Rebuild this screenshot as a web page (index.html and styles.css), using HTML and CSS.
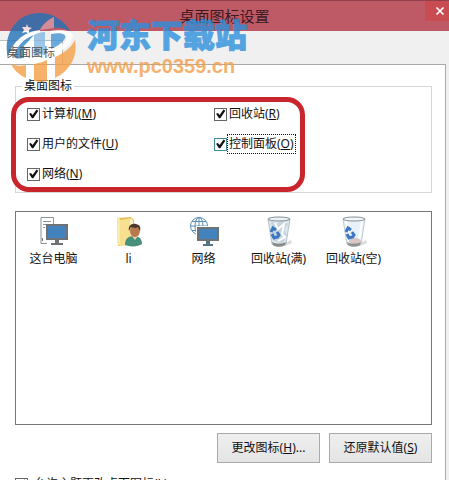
FILE: index.html
```html
<!DOCTYPE html>
<html lang="zh-CN">
<head>
    <meta charset="UTF-8">
    <meta name="viewport" content="width=device-width, initial-scale=1.0">
    <title>桌面图标设置</title>
    <link rel="stylesheet" href="styles.css">
</head>
<body>
    <div class="window">
        <header class="titlebar">
            <h1>桌面图标设置</h1>
            <button class="close" aria-label="关闭">
                <svg width="10" height="10" viewBox="0 0 10 10"><path d="M1.500 1.500l7 7M8.500 1.500l-7 7" stroke="#fff" stroke-width="1.700"/></svg>
            </button>
        </header>

        <div class="tabs">
            <button class="tab"><span>桌面图标</span></button>
        </div>

        <main class="panel">
            <fieldset class="group">
                <legend>桌面图标</legend>
                <div class="options">
                    <label><input type="checkbox" checked><span>计算机(<u>M</u>)</span></label>
                    <label><input type="checkbox" checked><span>回收站(<u>R</u>)</span></label>
                    <label><input type="checkbox" checked><span>用户的文件(<u>U</u>)</span></label>
                    <label class="focused"><input type="checkbox" checked><span>控制面板(<u>O</u>)</span></label>
                    <label><input type="checkbox" checked><span>网络(<u>N</u>)</span></label>
                </div>
                <div class="marker"></div>
            </fieldset>

            <ul class="icon-list">
                <li>
                    <svg width="32" height="32" viewBox="0 0 32 32">
                        <path d="M3 1.500h12.500v7M3 1.500v26h6M5 5.500h8M5 8.500h5M5 11.500h2" fill="none" stroke="#8b939b"/>
                        <path d="M4.500 22v3" stroke="#777"/>
                        <rect x="8" y="8" width="22" height="16" fill="#fff"/>
                        <rect x="9" y="9" width="20" height="14" fill="#4383bd" stroke="#6e7275" stroke-width="2"/>
                        <path d="M17 24h4v3h4v2H13v-2h4z" fill="#6e7275"/>
                    </svg>
                    <span>这台电脑</span>
                </li>
                <li>
                    <svg width="32" height="32" viewBox="0 0 32 32">
                        <path d="M5 2l13-1 3 3v24L5 30z" fill="#e5bd56"/>
                        <path d="M4 1l3 2v27l-3-3z" fill="#f8e9ad"/>
                        <path d="M7 4l12-2v26L7 30z" fill="#f7e08f"/>
                        <path d="M17 3l3 1v11h-3z" fill="#fff3c5"/>
                        <path d="M12 29c0-6 3-9 9-9s8 4 8 8c-4 3-12 3-17 1z" fill="#478f7a"/>
                        <path d="M19 20l3 4 3-4-1-3h-4z" fill="#f0d3b0"/>
                        <ellipse cx="22" cy="15" rx="5" ry="6" fill="#b9794e"/>
                        <path d="M16 15c-1-5 2-8 7-7 4 1 5 3 4 7l-2-4c-3 2-5 0-7 0z" fill="#49382b"/>
                    </svg>
                    <span>li</span>
                </li>
                <li>
                    <svg width="32" height="32" viewBox="0 0 32 32">
                        <g fill="none" stroke="#5a8fb3"><circle cx="11" cy="10" r="8.500"/><ellipse cx="11" cy="10" rx="4" ry="8.500"/><path d="M2.500 10h17M4 5.500h14M4 14.500h14M11 1.500v17"/></g>
                        <rect x="8" y="10" width="23" height="16" fill="#fff"/>
                        <rect x="10" y="12" width="20" height="12" fill="#4383bd" stroke="#6e7275" stroke-width="2"/>
                        <path d="M18 25h4v3h3v2H15v-2h3z" fill="#537487"/>
                    </svg>
                    <span>网络</span>
                </li>
                <li>
                    <svg width="32" height="32" viewBox="0 0 32 32">
                        <path d="M21 28l7-4 1 3-7 3z" fill="#ddd"/>
                        <path d="M5 3l4 25c3 3 11 3 14 0l4-25z" fill="#dce6ed" stroke="#b6c2cb"/>
                        <path d="M8 5l6 3 4-4 7 4-4 6 3 5-4 8-9-2-2-12z" fill="#c8d4dd"/>
                        <path d="M12 7l3 6 6-5-2 10 3 3-7 4" fill="none" stroke="#fff" stroke-width="2"/>
                        <ellipse cx="16" cy="3" rx="11" ry="2" fill="#eef2f4" stroke="#858f96"/>
                        <path d="M9 26c4 2 10 2 14 0l-1 3c-3 2-9 2-12 0z" fill="#8a8a8a"/>
                        <g fill="none" stroke="#3c78c2" stroke-width="3"><path d="M8 16l2-4 3 2M9 18l2 4 3-1M14 16l2 3-2 3"/></g>
                    </svg>
                    <span>回收站(满)</span>
                </li>
                <li>
                    <svg width="32" height="32" viewBox="0 0 32 32">
                        <path d="M21 28l7-4 1 3-7 3z" fill="#ddd"/>
                        <path d="M5 3l4 25c3 3 11 3 14 0l4-25z" fill="#e8f1f8" stroke="#bdcad3"/>
                        <path d="M8 5l3 20M24 5l-3 20" stroke="#fff" stroke-width="2"/>
                        <ellipse cx="16" cy="3" rx="11" ry="2" fill="#f5f8fa" stroke="#858f96"/>
                        <ellipse cx="17" cy="25" rx="6" ry="3" fill="#d9c6c5"/>
                        <path d="M9 26c4 2 10 2 14 0l-1 3c-3 2-9 2-12 0z" fill="#929292"/>
                        <g fill="none" stroke="#3c78c2" stroke-width="3"><path d="M8 16l2-4 3 2M9 18l2 4 3-1M14 16l2 3-2 3"/></g>
                    </svg>
                    <span>回收站(空)</span>
                </li>
            </ul>

            <div class="actions">
                <button>更改图标(<u>H</u>)...</button>
                <button>还原默认值(<u>S</u>)</button>
            </div>

            <label class="theme"><input type="checkbox" checked><span>允许主题更改桌面图标(<u>L</u>)</span></label>
        </main>

        <div class="watermark">
            <svg width="72" height="70" viewBox="0 0 72 70">
                <path d="M3 47C-3 22 12 1 34 1c14 0 25 7 31 18-6-3-11-4-16-3V5c-6 3-12 8-14 13C19 20 7 32 3 47z" fill="#2372b8"/>
                <path d="M49 16V5c-6 3-12 8-14 13z" fill="#d99aa8"/>
                <path d="M3 46c3-15 15-26 32-28v24C24 48 10 50 3 46z" fill="#fff"/>
                <path d="M9 45c2-10 9-18 20-22L19 34v12c-4 1-8 1-10-1z" fill="#2f86cb"/>
                <path d="M29 23c3-2 7-3 11-3v21l-11 4z" fill="#85b9e4"/>
                <path d="M45 19c17-3 26 1 22 9C61 42 24 55 4 47c22 1 51-9 57-19 3-5-5-7-16-5z" fill="#fff"/>
                <path d="M46 22c12-2 17 1 13 6-3 4-8 7-13 9z" fill="#4795d2"/>
                <path d="M6 52c5 2 10 2 15 1v13C14 63 9 58 6 52z" fill="#f5a047"/>
                <path d="M29 52c5-1 9-2 13-4v21c-4 1-9 1-13 0z" fill="#f5a047"/>
                <path d="M50 45c9-4 16-9 20-17 3 16-5 31-20 38z" fill="#f5a047"/>
                <path d="M22 12l1 3 4 1-3 2v4l-3-2-4 1 2-3-2-3h4z" fill="#fff"/>
            </svg>
            <div class="brand">
                <strong>河东下载站</strong>
                <span>www.pc0359.cn</span>
            </div>
        </div>
    </div>
</body>
</html>
```
FILE: styles.css
```css
* {
    box-sizing: border-box;
}
body {
    margin: 0;
    height: 100vh;
    overflow: hidden;
    background-color: #f0f0f0;
    color: #111;
    font-family: 'Noto Sans', 'Noto Sans CJK SC', sans-serif;
    font-size: 12px;
    line-height: 18px;
}
button {
    font: inherit;
    color: inherit;
}
.window {
    position: relative;
}
.titlebar {
    position: relative;
    display: flex;
    align-items: center;
    justify-content: center;
    height: 31px;
    background-color: #be5a66;
    border-top: 1px solid #92404c;
}
h1 {
    margin: 0;
    font-size: 15px;
    font-weight: normal;
    color: #3c1820;
}
.close {
    position: absolute;
    top: 0;
    right: 0;
    width: 24px;
    height: 20px;
    padding: 0 0 0 10px;
    border: none;
    background-color: #c94c50;
    line-height: 0;
    text-align: left;
}
.tabs {
    height: 33px;
    padding-top: 9px;
}
.tab {
    width: 63px;
    height: 24px;
    padding: 0;
    border: 1px solid #bbb;
    border-width: 1px 1px 0 0;
    background-color: #fff;
    color: #555;
}
.tab span {
    position: relative;
    z-index: 1;
}
.panel {
    margin-right: 3px;
    padding: 12px 13px 0 15px;
    background-color: #fff;
    border: 1px solid #aaa;
    border-width: 1px 1px 0 0;
}
.group {
    position: relative;
    margin: 0;
    padding: 9px 11px 8px;
    border: 1px solid #d5d8d8;
}
legend {
    margin-left: -5px;
    padding: 0 2px;
    line-height: 18px;
}
.options {
    display: grid;
    grid-template-columns: 187px auto;
    row-gap: 10px;
}
label {
    display: flex;
    align-items: center;
    height: 20px;
}
label span {
    padding: 0 1px;
    border: 1px solid transparent;
}
.focused span {
    border: 1px dotted #111;
}
input[type="checkbox"] {
    appearance: none;
    width: 13px;
    height: 13px;
    margin: 0;
    border: 1px solid #666;
    background-color: #fff;
}
input[type="checkbox"]:checked::before {
    content: "";
    display: block;
    width: 11px;
    height: 11px;
    background-color: #111;
    clip-path: polygon(10% 48%, 26% 40%, 42% 60%, 78% 10%, 94% 20%, 48% 88%, 36% 88%);
}
.focused input[type="checkbox"] {
    border-color: #3f8c9a;
}
/* 红色标记框 */
.marker {
    position: absolute;
    top: 2px;
    left: -5px;
    width: 294px;
    height: 95px;
    border: 5px solid #c9252d;
    border-radius: 18px;
    pointer-events: none;
}
.icon-list {
    display: flex;
    height: 214px;
    margin: 18px 0 0;
    padding: 4px 0;
    list-style: none;
    border: 1px solid #777;
}
.icon-list li {
    display: flex;
    flex-direction: column;
    align-items: center;
    gap: 2px;
    width: 75px;
}
.icon-list svg {
    display: block;
}
.actions {
    display: flex;
    justify-content: flex-end;
    gap: 9px;
    margin-top: 8px;
}
.actions button {
    width: 103px;
    height: 30px;
    padding: 0;
    border: 1px solid #aaa;
    background: linear-gradient(#efefef, #e4e4e4);
}
.theme {
    margin-top: 11px;
}
.theme span {
    margin-left: 4px;
}
.watermark {
    position: absolute;
    top: 12px;
    left: 5px;
    display: flex;
    gap: 10px;
    opacity: 0.8;
    pointer-events: none;
}
.brand {
    display: flex;
    flex-direction: column;
    padding-top: 4px;
}
.brand strong {
    font-size: 32px;
    font-weight: 900;
    line-height: 38px;
    color: #2c90dd;
    -webkit-text-stroke: 1px #2c90dd;
}
.brand span {
    font-family: 'Liberation Sans', Arial, sans-serif;
    font-size: 20px;
    font-weight: bold;
    line-height: 24px;
    color: #f3a04b;
}
```
